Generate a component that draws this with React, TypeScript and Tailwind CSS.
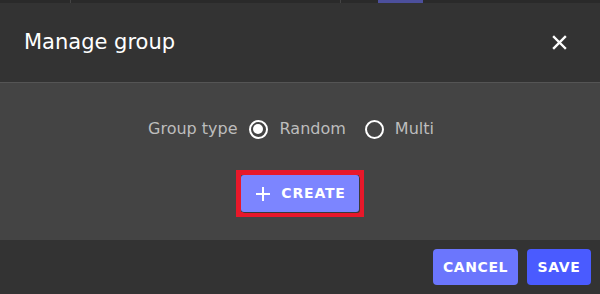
export default function App() {
  return (
    <div
      className="w-[600px] h-[294px] flex flex-col bg-[#333333] overflow-hidden"
      style={{ fontFamily: '"DejaVu Sans", "Noto Sans", sans-serif' }}
    >
      {/* page behind the modal */}
      <div className="h-[3px] flex bg-[#2a2a2a]">
        <div className="w-[70px]" />
        <div className="w-px bg-[#444]" />
        <div className="w-[269px]" />
        <div className="w-px bg-[#444]" />
        <div className="w-[37px]" />
        <div className="w-[45px] bg-[#4c4f9c]" />
      </div>

      <div className="h-[80px] flex items-center justify-between pl-6 pr-[33px] border-b border-[#555555]">
        <h2 className="text-[21px] text-white">Manage group</h2>
        <svg width="15" height="15" viewBox="0 0 15 15">
          <path d="M2 2L13 13M13 2L2 13" stroke="white" strokeWidth="2.4" strokeLinecap="square" />
        </svg>
      </div>

      <div className="h-[157px] bg-[#444444] flex flex-col items-center pt-[34px]">
        <div className="flex items-center text-[16px] text-[#bdbdbd] mr-[18px]">
          <span>Group type</span>
          <span className="ml-[11px] w-[19px] h-[19px] rounded-full border-2 border-white flex items-center justify-center">
            <span className="w-[10px] h-[10px] rounded-full bg-white" />
          </span>
          <span className="ml-[12px]">Random</span>
          <span className="ml-[19px] w-[19px] h-[19px] rounded-full border-2 border-white" />
          <span className="ml-[11px]">Multi</span>
        </div>

        <div className="mt-[29px] border-[5px] border-[#e8182a]">
          <button className="w-[118px] h-[37px] bg-[#7c85ff] rounded-[3px] shadow-[1px_1px_0_#3a3a3a] flex items-center justify-center gap-[11px] pl-[2px] text-white font-bold text-[14px] tracking-[0.8px]">
            <svg width="14" height="14" viewBox="0 0 14 14">
              <path d="M7 0V14M0 7H14" stroke="white" strokeWidth="2" />
            </svg>
            CREATE
          </button>
        </div>
      </div>

      <div className="flex-1 flex items-center justify-end gap-[9px] pr-[9px]">
        <button className="w-[85px] h-[36px] rounded-[4px] bg-[#6b76fd] text-white font-bold text-[14px] tracking-[0.6px]">
          CANCEL
        </button>
        <button className="w-[64px] h-[36px] rounded-[4px] bg-[#4a5bff] text-white font-bold text-[14px] tracking-[0.6px]">
          SAVE
        </button>
      </div>
    </div>
  );
}
